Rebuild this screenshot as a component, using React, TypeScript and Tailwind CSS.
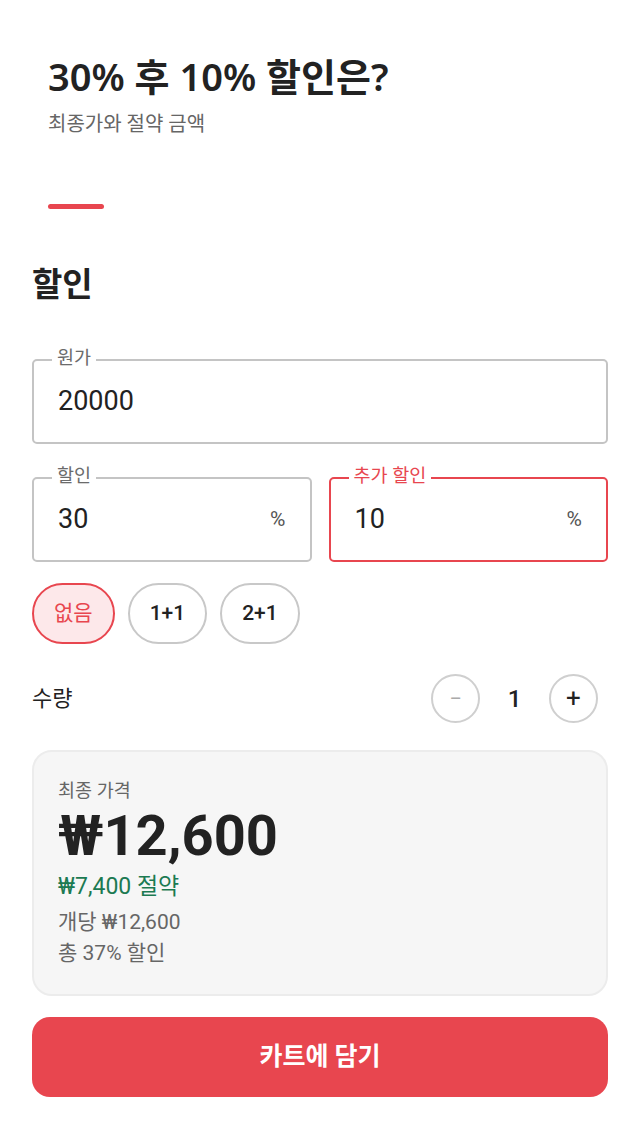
import { useState } from 'react';

const FONT = 'font-["Roboto","Noto_Sans_CJK_KR",sans-serif]';

function Field({ label, value, suffix, active }: { label: string; value: string; suffix?: string; active?: boolean }) {
  return (
    <div
      className={`relative h-[85px] rounded-[5px] border-2 flex items-center pl-6 pr-6 ${
        active ? 'border-[#e8464f]' : 'border-[#c4c4c4]'
      }`}
    >
      <span
        className={`absolute -top-[15px] left-[18px] bg-white px-[5px] text-[18.5px] leading-6 ${
          active ? 'text-[#e8464f]' : 'text-[#6b6b6b]'
        }`}
      >
        {label}
      </span>
      <span className="flex-1 text-[27px] text-[#222]">{value}</span>
      {suffix && <span className="text-[21px] text-[#555]">{suffix}</span>}
    </div>
  );
}

export default function App() {
  const [deal, setDeal] = useState('없음');
  const [qty, setQty] = useState(1);

  return (
    <div className={`min-h-screen bg-white ${FONT}`}>
      {/* Header */}
      <div className="px-12 pt-[52px]">
        <h1 className='font-["Noto_Sans","Noto_Sans_CJK_KR",sans-serif] text-[38px] font-semibold leading-[48px] text-[#222]'>
          30% 후 10% 할인은?
        </h1>
        <p className="mt-[10px] text-[20px] leading-7 text-[#666]">최종가와 절약 금액</p>
        <div className="mt-[66px] h-[5px] w-14 rounded-full bg-[#e8464f]" />
      </div>

      <div className="px-8">
        <h2 className="mt-[55px] text-[33px] font-bold leading-[42px] text-[#222]">할인</h2>

        <div className="mt-[53px]">
          <Field label="원가" value="20000" />
        </div>
        <div className="mt-[33px] grid grid-cols-2 gap-[17px]">
          <Field label="할인" value="30" suffix="%" />
          <Field label="추가 할인" value="10" suffix="%" active />
        </div>

        {/* Deal chips */}
        <div className="mt-[21px] flex gap-[13px]">
          {['없음', '1+1', '2+1'].map((d) => (
            <button
              key={d}
              onClick={() => setDeal(d)}
              className={`h-[61px] rounded-full border-2 px-[20px] text-[21px] ${
                deal === d
                  ? 'border-[#e8464f] bg-[#fde8ea] text-[#e8464f]'
                  : 'border-[#c8c8c8] bg-white text-[#222] font-medium'
              }`}
            >
              {d}
            </button>
          ))}
        </div>

        {/* Quantity */}
        <div className="mt-[30px] flex items-center justify-between pr-[10px]">
          <span className="text-[22px] text-[#222]">수량</span>
          <div className="flex items-center gap-[24px]">
            <button
              onClick={() => setQty(Math.max(1, qty - 1))}
              className="flex h-[49px] w-[49px] items-center justify-center rounded-full border-2 border-[#cfcfcf] text-[22px] text-[#aaa]"
            >
              −
            </button>
            <span className="w-[21px] text-center text-[24px] font-medium text-[#222]">{qty}</span>
            <button
              onClick={() => setQty(qty + 1)}
              className="flex h-[49px] w-[49px] items-center justify-center rounded-full border-2 border-[#cfcfcf] text-[26px] text-[#222]"
            >
              +
            </button>
          </div>
        </div>

        {/* Result */}
        <div className="mt-[27px] rounded-[20px] border-2 border-[#ececec] bg-[#f6f6f6] px-6 pt-[25px] pb-[25px]">
          <div className="text-[18.5px] leading-7 text-[#666]">최종 가격</div>
          <div className="text-[56px] font-bold leading-[62px] text-[#222]">₩12,600</div>
          <div className="mt-[4px] text-[23px] leading-8 text-[#1c7a52]">₩7,400 절약</div>
          <div className="mt-[4px] text-[21px] leading-[31px] text-[#666]">개당 ₩12,600</div>
          <div className="text-[21px] leading-[31px] text-[#666]">총 37% 할인</div>
        </div>

        <button className="mt-[21px] h-[80px] w-full rounded-[18px] bg-[#e8464f] text-[25px] font-bold text-white">
          카트에 담기
        </button>
      </div>
    </div>
  );
}
